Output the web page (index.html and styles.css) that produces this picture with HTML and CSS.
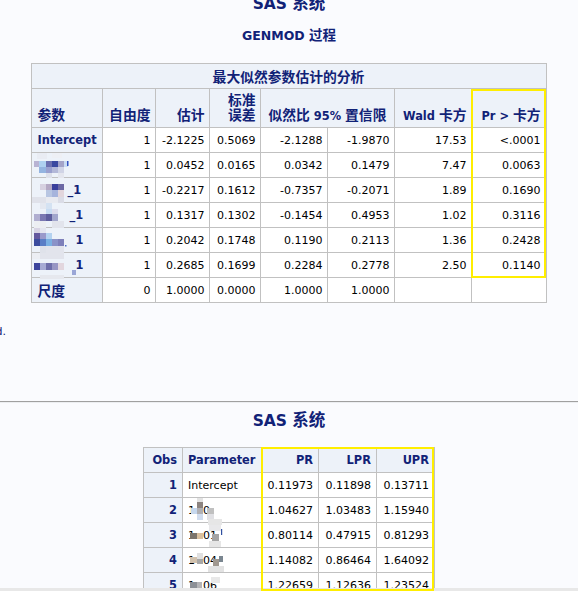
FILE: index.html
```html
<!DOCTYPE html>
<html lang="zh">
<head>
<meta charset="utf-8">
<title>SAS 系统</title>
<link rel="stylesheet" href="styles.css">
</head>
<body>
<div class="page">
  <h1 class="title t1">SAS <span class="zh">系统</span></h1>
  <h2 class="proc">GENMOD <span class="zh">过程</span></h2>

  <table class="sas est">
    <colgroup>
      <col class="w71"><col class="w53"><col class="w54"><col class="w51"><col class="w67"><col class="w67"><col class="w77"><col class="w73">
    </colgroup>
    <thead>
      <tr class="caprow"><th colspan="8" class="cap"><span class="zh">最大似然参数估计的分析</span></th></tr>
      <tr class="hdr">
        <th class="l"><span class="zh">参数</span></th>
        <th><span class="zh">自由度</span></th>
        <th><span class="zh">估计</span></th>
        <th><span class="zh">标准<br>误差</span></th>
        <th colspan="2" class="c"><span class="zh">似然比</span> 95% <span class="zh">置信限</span></th>
        <th>Wald <span class="zh">卡方</span></th>
        <th>Pr &gt; <span class="zh">卡方</span></th>
      </tr>
    </thead>
    <tbody>
      <tr><th class="l rh">Intercept</th><td>1</td><td>-2.1225</td><td>0.5069</td><td>-2.1288</td><td>-1.9870</td><td>17.53</td><td>&lt;.0001</td></tr>
      <tr><th class="l rh mosc">
        <svg class="mos" width="40" height="26" viewBox="0 0 40 26" aria-hidden="true">
          <rect x="5" y="0" width="10" height="6" fill="#e9ecf3"/><rect x="20" y="0" width="10" height="5" fill="#eef0f5"/>
          <rect x="2" y="8" width="5" height="6" fill="#b8b3d3"/><rect x="7" y="8" width="7" height="6" fill="#aed0f0"/><rect x="14" y="8" width="6" height="6" fill="#6c70b0"/><rect x="20" y="8" width="6" height="6" fill="#3a48a0"/><rect x="26" y="8" width="6" height="6" fill="#a3a3c8"/><rect x="32" y="8" width="4" height="6" fill="#c9dcf4"/><rect x="35" y="8" width="1.5" height="5" fill="#3050c0"/>
          <rect x="7" y="14" width="7" height="6" fill="#94b4e0"/><rect x="14" y="14" width="6" height="6" fill="#9aa0cf"/><rect x="20" y="14" width="6" height="6" fill="#b3b8d8"/><rect x="26" y="14" width="6" height="6" fill="#d0d4e6"/>
          <rect x="14" y="20" width="6" height="5" fill="#dde0ea"/><rect x="26" y="20" width="6" height="5" fill="#e4e6ee"/>
        </svg></th><td>1</td><td>0.0452</td><td>0.0165</td><td>0.0342</td><td>0.1479</td><td>7.47</td><td>0.0063</td></tr>
      <tr><th class="l rh mosc">
        <svg class="mos" width="40" height="30" viewBox="0 0 40 30" aria-hidden="true">
          <rect x="8" y="6" width="6" height="6" fill="#d6d0e0"/><rect x="14" y="6" width="6" height="6" fill="#b4a8c4"/><rect x="20" y="6" width="6" height="6" fill="#3a3f9c"/><rect x="26" y="6" width="6" height="6" fill="#6c68a4"/>
          <rect x="14" y="12" width="6" height="7" fill="#b8c6e2"/><rect x="20" y="12" width="6" height="7" fill="#a6b4dc"/><rect x="26" y="12" width="6" height="7" fill="#e2d6dc"/>
          <rect x="0" y="19" width="14" height="6" fill="#e0e2ea"/><rect x="14" y="19" width="12" height="6" fill="#e8eaf0"/><rect x="26" y="19" width="6" height="6" fill="#dadce6"/>
        </svg><span class="mtxt">_1</span></th><td>1</td><td>-0.2217</td><td>0.1612</td><td>-0.7357</td><td>-0.2071</td><td>1.89</td><td>0.1690</td></tr>
      <tr><th class="l rh mosc">
        <svg class="mos" width="40" height="26" viewBox="0 0 40 26" aria-hidden="true">
          <rect x="8" y="0" width="6" height="6" fill="#e4e8f0"/><rect x="14" y="0" width="6" height="6" fill="#d4e2f2"/>
          <rect x="14" y="6" width="6" height="5" fill="#c8dcf2"/><rect x="20" y="6" width="6" height="5" fill="#dcdcec"/>
          <rect x="2" y="11" width="6" height="7" fill="#b0aed0"/><rect x="8" y="11" width="6" height="7" fill="#7a78b2"/><rect x="14" y="11" width="6" height="7" fill="#5e5e9e"/><rect x="20" y="11" width="6" height="7" fill="#a2a6cc"/>
          <rect x="2" y="18" width="12" height="7" fill="#eceef2"/><rect x="20" y="18" width="12" height="7" fill="#e2e4ec"/>
        </svg><span class="mtxt m2">_1</span></th><td>1</td><td>0.1317</td><td>0.1302</td><td>-0.1454</td><td>0.4953</td><td>1.02</td><td>0.3116</td></tr>
      <tr><th class="l rh mosc">
        <svg class="mos" width="40" height="26" viewBox="0 0 40 26" aria-hidden="true">
          <rect x="2" y="0" width="6" height="5" fill="#d8d4e4"/><rect x="8" y="0" width="6" height="5" fill="#e4e6f0"/>
          <rect x="2" y="5" width="6" height="6" fill="#64589e"/><rect x="8" y="5" width="6" height="6" fill="#9a9acb"/><rect x="14" y="5" width="6" height="6" fill="#b4d2f0"/>
          <rect x="2" y="11" width="6" height="7" fill="#3c4c9e"/><rect x="8" y="11" width="6" height="7" fill="#5a7ec6"/><rect x="14" y="11" width="6" height="7" fill="#7ab0e2"/><rect x="20" y="11" width="6" height="7" fill="#8a92c8"/><rect x="26" y="11" width="6" height="7" fill="#7e80ba"/>
          <rect x="8" y="18" width="6" height="7" fill="#dfe2ea"/><rect x="14" y="18" width="18" height="7" fill="#e2e4ec"/><rect x="33" y="17" width="1.5" height="1.5" fill="#5070c8"/>
        </svg><span class="mtxt m3">1</span></th><td>1</td><td>0.2042</td><td>0.1748</td><td>0.1190</td><td>0.2113</td><td>1.36</td><td>0.2428</td></tr>
      <tr><th class="l rh mosc">
        <svg class="mos" width="48" height="26" viewBox="0 0 48 26" aria-hidden="true">
          <rect x="0" y="0" width="8" height="6" fill="#eceef3"/><rect x="8" y="0" width="24" height="6" fill="#e2e4ec"/>
          <rect x="2" y="10" width="6" height="7" fill="#3c449c"/><rect x="8" y="10" width="6" height="7" fill="#a6aad4"/><rect x="14" y="10" width="6" height="7" fill="#6e6eaa"/><rect x="20" y="10" width="6" height="7" fill="#9896c4"/><rect x="26" y="10" width="6" height="7" fill="#e2d6de"/>
          <rect x="40" y="17" width="4" height="5" fill="#9aa6d6"/>
          <rect x="8" y="22" width="24" height="4" fill="#e6e8ee"/>
        </svg><span class="mtxt m3">1</span></th><td>1</td><td>0.2685</td><td>0.1699</td><td>0.2284</td><td>0.2778</td><td>2.50</td><td>0.1140</td></tr>
      <tr><th class="l rh"><span class="zh">尺度</span></th><td>0</td><td>1.0000</td><td>0.0000</td><td>1.0000</td><td>1.0000</td><td></td><td></td></tr>
    </tbody>
  </table>

  <p class="note">d.</p>

  <div class="rule"></div>

  <h1 class="title t2">SAS <span class="zh">系统</span></h1>

  <table class="sas obs">
    <colgroup>
      <col class="w39"><col class="w80"><col class="w56"><col class="w58"><col class="w57">
    </colgroup>
    <thead>
      <tr class="hdr2"><th>Obs</th><th class="l">Parameter</th><th>PR</th><th>LPR</th><th>UPR</th></tr>
    </thead>
    <tbody>
      <tr><th class="rh">1</th><td class="l">Intercept</td><td>0.11973</td><td>0.11898</td><td>0.13711</td></tr>
      <tr><th class="rh">2</th><td class="l mosc">
        <svg class="mos" width="44" height="28" viewBox="0 0 44 28" aria-hidden="true">
          <rect x="14" y="0" width="6" height="4" fill="#e4e4e4"/>
          <rect x="14" y="4" width="6" height="6" fill="#8c8480"/>
          <rect x="8" y="10" width="6" height="6" fill="#c6d8ee"/><rect x="14" y="10" width="6" height="6" fill="#b0b0b4"/><rect x="24" y="10" width="7" height="6" fill="#c0c0c0"/>
          <rect x="14" y="16" width="6" height="6" fill="#d0dcee"/><rect x="24" y="16" width="7" height="6" fill="#e0e0e4"/>
          <rect x="25" y="21" width="14" height="6" fill="#e6e6e6"/>
        </svg><span class="t1c">1</span><span class="t2c">0</span></td><td>1.04627</td><td>1.03483</td><td>1.15940</td></tr>
      <tr><th class="rh">3</th><td class="l mosc">
        <svg class="mos" width="44" height="26" viewBox="0 0 44 26" aria-hidden="true">
          <rect x="26" y="2" width="12" height="6" fill="#e8e8ea"/>
          <rect x="7" y="10" width="7" height="6" fill="#7a746c"/><rect x="14" y="10" width="6" height="6" fill="#d8c0a0"/>
          <rect x="29" y="11" width="7" height="7" fill="#a4a4a4"/><rect x="38" y="6" width="1.2" height="6" fill="#3050a0"/>
          <rect x="26" y="18" width="12" height="6" fill="#e6e6e6"/>
        </svg><span class="t1c">1</span><span class="t2c">01</span></td><td>0.80114</td><td>0.47915</td><td>0.81293</td></tr>
      <tr><th class="rh">4</th><td class="l mosc">
        <svg class="mos" width="44" height="26" viewBox="0 0 44 26" aria-hidden="true">
          <rect x="14" y="5" width="6" height="6" fill="#e0e0e0"/>
          <rect x="7" y="9" width="7" height="6" fill="#d2c2ae"/><rect x="14" y="11" width="6" height="5" fill="#a8a8a8"/>
          <rect x="36" y="8" width="4" height="6" fill="#7a8690"/><rect x="30" y="11" width="6" height="7" fill="#a09890"/>
          <rect x="25" y="18" width="16" height="6" fill="#e2e2e2"/>
        </svg><span class="t1c">1</span><span class="t2c">04</span></td><td>1.14082</td><td>0.86464</td><td>1.64092</td></tr>
      <tr><th class="rh">5</th><td class="l mosc">
        <svg class="mos" width="44" height="26" viewBox="0 0 44 26" aria-hidden="true">
          <rect x="28" y="4" width="9" height="6" fill="#e8e8e8"/>
          <rect x="7" y="9" width="7" height="6" fill="#8c9096"/><rect x="14" y="9" width="5" height="6" fill="#b4b4b6"/>
          <rect x="30" y="15" width="7" height="4" fill="#eaeaea"/>
        </svg><span class="t1c">1</span><span class="t2c">06</span></td><td>1.22659</td><td>1.12636</td><td>1.23524</td></tr>
    </tbody>
  </table>

  <div class="mark mark1"></div>
  <div class="mark mark2"></div>
</div>
<div class="hscroll"></div>
</body>
</html>
```
FILE: styles.css
```css
* { box-sizing: border-box; }
html, body { margin: 0; padding: 0; }
body {
  background: #fafbfe;
  font-family: "DejaVu Sans", "Noto Sans CJK SC", sans-serif;
  color: #000;
  width: 578px;
  height: 591px;
  overflow: hidden;
}
.page { position: relative; display: flow-root; width: 578px; }
.zh { font-family: "Noto Sans CJK SC", sans-serif; }

.title {
  margin: 0;
  text-align: center;
  color: #112277;
  font-weight: bold;
  font-size: 15.5px;
  line-height: 20px;
  height: 20px;
}
.title .zh { font-size: 16.5px; line-height: 1; }
.t1 { margin-top: -6px; }
.proc {
  margin: 12px 0 0;
  text-align: center;
  color: #112277;
  font-weight: bold;
  font-size: 12.5px;
  line-height: 20px;
  height: 20px;
}
.proc .zh { font-size: 13.5px; line-height: 1; }

table.sas {
  border-collapse: collapse;
  table-layout: fixed;
  margin: 0 auto;
  background: #fff;
}
table.est { margin-top: 17px; width: 514px; }
table.obs { margin-top: 16px; width: 291px; }
.w71 { width: 71px; } .w53 { width: 53px; } .w54 { width: 54px; } .w51 { width: 51px; }
.w67 { width: 67px; } .w77 { width: 77px; } .w73 { width: 74px; }
.w39 { width: 39px; } .w80 { width: 80px; } .w56 { width: 56px; } .w58 { width: 58px; } .w57 { width: 58px; }

.sas th, .sas td {
  border: 1px solid #c1c1c1;
  padding: 0 5px 0 4px;
  text-align: right;
  white-space: nowrap;
}
.sas td { font-size: 11px; height: 25px; vertical-align: middle; }
.sas th {
  background: #edf2f9;
  color: #112277;
  font-weight: bold;
  font-size: 11.4px;
}
.sas th .zh { font-size: 13.8px; }
.sas .l { text-align: left; padding-left: 5px; }
.sas .c { text-align: center; }
.sas tbody th { height: 25px; vertical-align: middle; }
.caprow th { height: 25px; vertical-align: middle; text-align: center; }
.hdr th { height: 39px; vertical-align: bottom; line-height: 13px; padding-bottom: 4px; }
.hdr2 th { height: 25px; vertical-align: middle; }

.mosc { position: relative; }
.mos { position: absolute; left: 0; top: 0; overflow: visible; }
.mtxt { color: #112277; padding-left: 30px; font-weight: bold; }
.mtxt.m2 { padding-left: 32px; }
.mtxt.m3 { padding-left: 38px; }
.t1c { padding-left: 0; color: #000; }
.t2c { padding-left: 8px; }

.note {
  margin: 22px 0 0 -4.5px;
  font-size: 11px;
  line-height: 14px;
  color: #112277;
}
.rule {
  margin-top: 62px;
  height: 2px;
  border-top: 1px solid #a0a0a0;
  background: #eceef1;
}
.t2 { margin-top: 8px; }

.mark { position: absolute; border: 2px solid #ffee00; }
.mark1 { left: 471px; top: 89px; width: 75px; height: 189px; }
.mark2 { left: 261px; top: 447px; width: 173px; height: 144px; z-index: 3; }

.hscroll {
  position: fixed;
  left: 0;
  right: 0;
  bottom: 0;
  height: 3px;
  background: #e8e8e8;
  z-index: 2;
}
```
